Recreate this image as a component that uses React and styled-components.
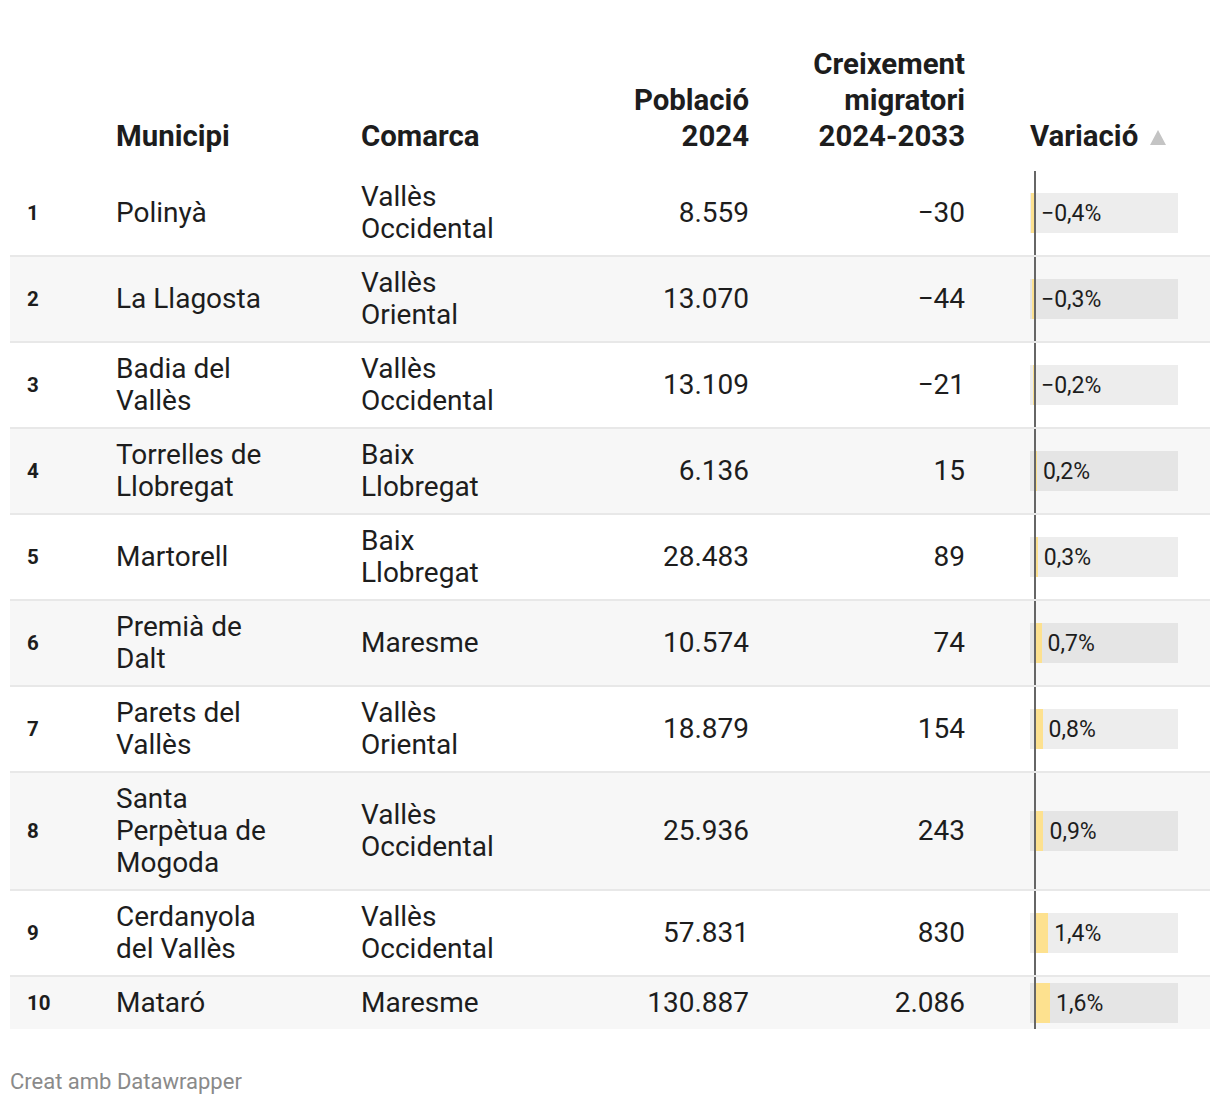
import React from "react";
import styled, { createGlobalStyle } from "styled-components";

const Global = createGlobalStyle`
  html, body { margin: 0; padding: 0; background: #ffffff; }
  body { font-family: Roboto, "Liberation Sans", sans-serif; color: #1d1d1d; }
`;

const COLS = "106px 245px 228px 160px 216px 1fr";
const SCALE = 9.4; // px per percentage point
const ZERO = 5; // px from the start of the track to zero

const rows = [
  { n: 1, mun: "Polinyà", com: "Vallès Occidental", pop: "8.559", cre: "−30", v: -0.4, lab: "−0,4%" },
  { n: 2, mun: "La Llagosta", com: "Vallès Oriental", pop: "13.070", cre: "−44", v: -0.3, lab: "−0,3%" },
  { n: 3, mun: "Badia del Vallès", com: "Vallès Occidental", pop: "13.109", cre: "−21", v: -0.2, lab: "−0,2%" },
  { n: 4, mun: "Torrelles de Llobregat", com: "Baix Llobregat", pop: "6.136", cre: "15", v: 0.2, lab: "0,2%" },
  { n: 5, mun: "Martorell", com: "Baix Llobregat", pop: "28.483", cre: "89", v: 0.3, lab: "0,3%" },
  { n: 6, mun: "Premià de Dalt", com: "Maresme", pop: "10.574", cre: "74", v: 0.7, lab: "0,7%" },
  { n: 7, mun: "Parets del Vallès", com: "Vallès Oriental", pop: "18.879", cre: "154", v: 0.8, lab: "0,8%" },
  { n: 8, mun: "Santa Perpètua de Mogoda", com: "Vallès Occidental", pop: "25.936", cre: "243", v: 0.9, lab: "0,9%" },
  { n: 9, mun: "Cerdanyola del Vallès", com: "Vallès Occidental", pop: "57.831", cre: "830", v: 1.4, lab: "1,4%" },
  { n: 10, mun: "Mataró", com: "Maresme", pop: "130.887", cre: "2.086", v: 1.6, lab: "1,6%" },
];

const Page = styled.div`
  padding: 46px 10px 0 10px;
  width: 1200px;
`;

const HeaderRow = styled.div`
  display: grid;
  grid-template-columns: ${COLS};
  align-items: end;
  padding-bottom: 17px;
`;

const HeadCell = styled.div`
  font-family: Roboto, "Liberation Sans", sans-serif;
  font-weight: 700;
  font-size: 29.4px;
  line-height: 36px;
  color: #1d1d1d;
  text-align: ${(p) => (p.$right ? "right" : "left")};
  padding-left: ${(p) => p.$pl || 0}px;
  display: flex;
  align-items: center;
  justify-content: ${(p) => (p.$right ? "flex-end" : "flex-start")};
`;

const SortArrow = styled.span`
  display: inline-block;
  width: 0;
  height: 0;
  margin-left: 12px;
  margin-top: 2px;
  border-left: 8px solid transparent;
  border-right: 8px solid transparent;
  border-bottom: 15px solid #c4c4c4;
`;

const Body = styled.div`
  display: flex;
  flex-direction: column;
`;

const Row = styled.div`
  display: grid;
  grid-template-columns: ${COLS};
  align-items: center;
  background: ${(p) => (p.$striped ? "#f7f7f7" : "#ffffff")};
  border-top: ${(p) => (p.$first ? "none" : "2px solid #e8e8e8")};
`;

const Cell = styled.div`
  font-size: 28px;
  line-height: 32px;
  padding: 10px ${(p) => p.$pr || 0}px 10px ${(p) => p.$pl || 0}px;
  text-align: ${(p) => (p.$right ? "right" : "left")};
  color: #1d1d1d;
`;

const Rank = styled.div`
  font-size: 20.5px;
  font-weight: 700;
  padding-left: 17px;
  color: #1d1d1d;
`;

const BarCell = styled.div`
  position: relative;
  align-self: stretch;
  display: flex;
  align-items: center;
  padding-left: 65px;
  &::before {
    content: "";
    position: absolute;
    left: 69px;
    top: 0;
    bottom: 0;
    width: 2px;
    background: #666666;
    z-index: 2;
  }
`;

const Track = styled.div`
  position: relative;
  width: 148px;
  height: 40px;
  background: rgba(0, 0, 0, 0.07);
`;

const Fill = styled.div`
  position: absolute;
  top: 0;
  bottom: 0;
  background: #fde18f;
`;

const BarLabel = styled.span`
  position: absolute;
  top: 0;
  bottom: 0;
  display: flex;
  align-items: center;
  font-size: 23px;
  color: #1d1d1d;
  white-space: nowrap;
`;

const Footer = styled.div`
  margin-top: 40px;
  font-size: 22px;
  line-height: 26px;
  color: #8a8a8a;
`;

function Bar({ v, label }) {
  const w = Math.abs(v) * SCALE;
  const left = v < 0 ? ZERO - w : ZERO;
  const labelLeft = ZERO + (v > 0 ? w : 0) + 6;
  return (
    <Track>
      <Fill style={{ left: `${left}px`, width: `${w}px` }} />
      <BarLabel style={{ left: `${labelLeft}px` }}>{label}</BarLabel>
    </Track>
  );
}

export default function App() {
  return (
    <>
      <Global />
      <Page>
        <HeaderRow>
          <HeadCell />
          <HeadCell>Municipi</HeadCell>
          <HeadCell>Comarca</HeadCell>
          <HeadCell $right>
            Població
            <br />
            2024
          </HeadCell>
          <HeadCell $right>
            Creixement
            <br />
            migratori
            <br />
            2024-2033
          </HeadCell>
          <HeadCell $pl={65}>
            Variació
            <SortArrow />
          </HeadCell>
        </HeaderRow>
        <Body>
          {rows.map((r, i) => (
            <Row key={r.n} $striped={i % 2 === 1} $first={i === 0}>
              <Rank>{r.n}</Rank>
              <Cell $pr={75}>{r.mun}</Cell>
              <Cell $pr={68}>{r.com}</Cell>
              <Cell $right>{r.pop}</Cell>
              <Cell $right>{r.cre}</Cell>
              <BarCell>
                <Bar v={r.v} label={r.lab} />
              </BarCell>
            </Row>
          ))}
        </Body>
        <Footer>Creat amb Datawrapper</Footer>
      </Page>
    </>
  );
}
